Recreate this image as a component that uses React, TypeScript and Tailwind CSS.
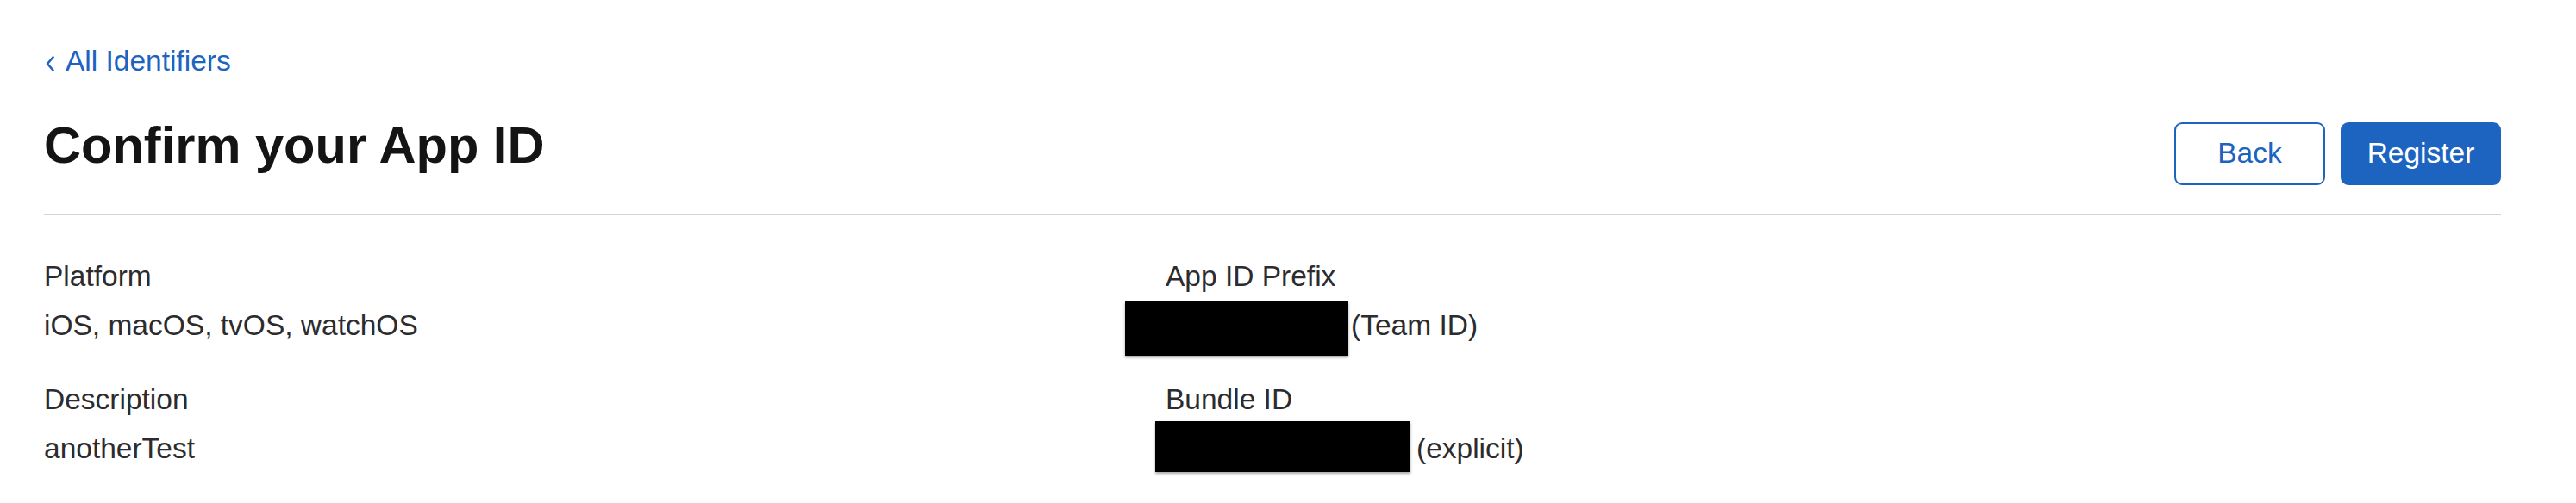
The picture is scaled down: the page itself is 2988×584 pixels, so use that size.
import React from "react";

const BLUE = "#1c64c0";

function Chevron() {
  return (
    <svg
      width="10"
      height="18"
      viewBox="0 0 10 18"
      className="ml-[2px] mt-[6px] shrink-0"
      fill="none"
      stroke="currentColor"
      strokeWidth="2.6"
      strokeLinecap="round"
      strokeLinejoin="round"
    >
      <polyline points="8.5,1.5 2,9 8.5,16.5" />
    </svg>
  );
}

type Row = { label: string; value: React.ReactNode };

function Field({ label, value }: Row) {
  return (
    <div>
      <p className="leading-[40px]">{label}</p>
      <div className="mt-[17px] leading-[40px]">{value}</div>
    </div>
  );
}

export default function App() {
  const left: Row[] = [
    { label: "Platform", value: "iOS, macOS, tvOS, watchOS" },
    { label: "Description", value: "anotherTest" },
  ];

  const right: Row[] = [
    {
      label: "App ID Prefix",
      value: (
        <p className="relative pl-[215px]">
          {/* redacted team id */}
          <span className="absolute left-[-47px] top-[-8px] h-[63px] w-[259px] bg-black shadow-[0_2px_3px_rgba(0,0,0,0.35)]" />
          (Team ID)
        </p>
      ),
    },
    {
      label: "Bundle ID",
      value: (
        <p className="relative pl-[291px]">
          {/* redacted bundle id */}
          <span className="absolute left-[-12px] top-[-12px] h-[59px] w-[296px] bg-black shadow-[0_2px_3px_rgba(0,0,0,0.35)]" />
          (explicit)
        </p>
      ),
    },
  ];

  return (
    <div className="h-[584px] w-[2988px] overflow-hidden bg-white pl-[51px] pr-[87px] font-['Liberation_Sans',Arial,sans-serif] text-[33.5px] text-[#2c2c2e]">
      <a className="flex w-max items-center gap-[13px] pt-[51px] leading-[40px] text-[#1c64c0]" href="#">
        <Chevron />
        <span>All Identifiers</span>
      </a>

      <div className="mt-[42px] flex items-baseline justify-between border-b-2 border-[#d6d6d8] pb-[33px]">
        <h1 className="text-[59.6px] font-bold leading-[72px] text-[#141414]">Confirm your App ID</h1>
        <div className="flex items-baseline gap-[18px]">
          <button
            className="inline-flex h-[73px] w-[175px] items-center justify-center rounded-[9px] border-2 bg-white leading-[40px]"
            style={{ borderColor: BLUE, color: BLUE }}
          >
            Back
          </button>
          <button
            className="inline-flex h-[73px] w-[186px] items-center justify-center rounded-[9px] leading-[40px] text-white"
            style={{ backgroundColor: BLUE }}
          >
            Register
          </button>
        </div>
      </div>

      <div className="mt-[51px] grid grid-cols-[1301px_1fr]">
        <div className="flex flex-col gap-[46px]">
          {left.map((r) => (
            <Field key={r.label} {...r} />
          ))}
        </div>
        <div className="flex flex-col gap-[46px]">
          {right.map((r) => (
            <Field key={r.label} {...r} />
          ))}
        </div>
      </div>
    </div>
  );
}
